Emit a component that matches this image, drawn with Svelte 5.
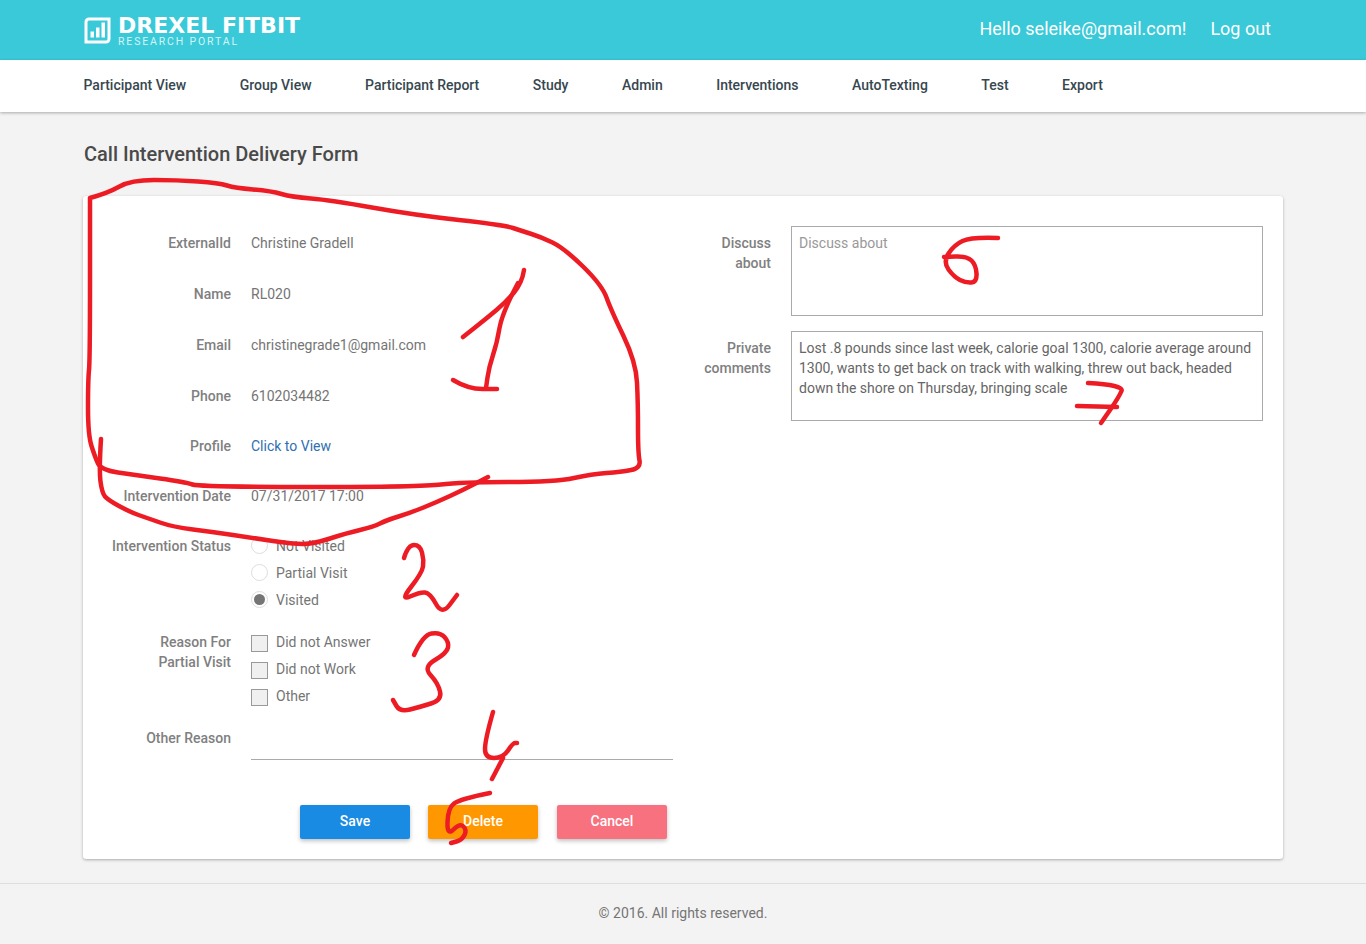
<script>
	const nav = ['Participant View', 'Group View', 'Participant Report', 'Study', 'Admin', 'Interventions', 'AutoTexting', 'Test', 'Export'];
	const info = [
		['ExternalId', 'Christine Gradell'],
		['Name', 'RL020'],
		['Email', 'christinegrade1@gmail.com']
	];
	const statuses = ['Not Visited', 'Partial Visit', 'Visited'];
	const reasons = ['Did not Answer', 'Did not Work', 'Other'];
	const comments = 'Lost .8 pounds since last week, calorie goal 1300, calorie average around 1300, wants to get back on track with walking, threw out back, headed down the shore on Thursday, bringing scale';

	// the reviewer's red pen marks, in page coordinates
	const strokes = [
		'90,198 108,193 131,180 177,180 219,183 235,188 271,191 292,197 330,200 414,215 504,225 522,231 541,237 564,248 602,285 611,310 636,362 638,403 638,453 641,468 621,472 592,474 556,482 460,482 422,487 200,487 185,482 135,475 101,470 95,457 88,435 88,380 90,360 90,198',
		'101,439 99,470 102,493 108,500 130,512 147,518 173,527 213,532 253,538 293,544 313,544 347,533 373,527 387,520 410,513 437,502 463,490 488,477',
		'524,270 522,283 506,302 487,318 463,337',
		'518,283 502,313 497,343 489,367 486,388',
		'453,380 468,389 497,389',
		'404,558 408,545 420,545 424,560 422,573 400,601 420,592 430,593 442,615 457,595',
		'414,655 423,635 440,632 449,642 447,653 423,667 438,683 442,700 420,707 400,712 393,700',
		'493,712 485,740 485,758 503,758 513,743 517,743',
		'503,758 492,779',
		'490,793 460,799 448,808 447,836 460,823 467,830 462,840 451,843',
		'998,238 971,237 954,245 943,262 954,277 966,283 977,282 976,265 967,256 944,257',
		'1088,383 1124,385 1119,397 1101,423',
		'1077,406 1117,407'
	];

	// run a quadratic through the midpoints so the pen lines don't look faceted
	function smooth(line) {
		const pts = line.split(' ').map((p) => p.split(',').map(Number));
		let d = `M${pts[0][0]} ${pts[0][1]}`;
		for (let i = 1; i < pts.length - 1; i++) {
			const mx = (pts[i][0] + pts[i + 1][0]) / 2;
			const my = (pts[i][1] + pts[i + 1][1]) / 2;
			d += ` Q${pts[i][0]} ${pts[i][1]} ${mx} ${my}`;
		}
		const last = pts[pts.length - 1];
		return d + ` L${last[0]} ${last[1]}`;
	}
	const marks = strokes.map(smooth);
</script>

<header>
	<div class="brand">
		<svg width="27" height="27" viewBox="0 0 27 27">
			<path d="M5 2 H25 V22 A3 3 0 0 1 22 25 H2 V5 A3 3 0 0 1 5 2 Z" fill="none" stroke="#fff" stroke-width="3" />
			<rect x="6.5" y="14.5" width="3.5" height="6" fill="#fff" />
			<rect x="12" y="10.5" width="3.5" height="10" fill="#fff" />
			<rect x="17.5" y="5.5" width="3.5" height="15" fill="#fff" />
		</svg>
		<div class="wordmark">
			<span class="name">DREXEL FITBIT</span>
			<span class="sub">RESEARCH PORTAL</span>
		</div>
	</div>
	<div class="user">
		<span>Hello seleike@gmail.com!</span>
		<span>Log out</span>
	</div>
</header>

<nav>
	{#each nav as item}
		<span>{item}</span>
	{/each}
</nav>

<main>
	<h1>Call Intervention Delivery Form</h1>
	<section class="card">
		<div class="col left">
			{#each info as [label, value]}
				<div class="row">
					<div class="label">{label}</div>
					<div class="value">{value}</div>
				</div>
			{/each}
			<div class="row short">
				<div class="label">Phone</div>
				<div class="value">6102034482</div>
			</div>
			<div class="row short">
				<div class="label">Profile</div>
				<div class="value link">Click to View</div>
			</div>
			<div class="row short">
				<div class="label">Intervention Date</div>
				<div class="value">07/31/2017 17:00</div>
			</div>
			<div class="row tight">
				<div class="label">Intervention Status</div>
				<div class="options">
					{#each statuses as status}
						<div class="option">
							<span class="radio" class:on={status === 'Visited'}></span>
							{status}
						</div>
					{/each}
				</div>
			</div>
			<div class="row tight">
				<div class="label">Reason For<br />Partial Visit</div>
				<div class="options">
					{#each reasons as reason}
						<div class="option">
							<span class="check"></span>
							{reason}
						</div>
					{/each}
				</div>
			</div>
			<div class="row other">
				<div class="label">Other Reason</div>
				<div class="underline"></div>
			</div>
			<div class="buttons">
				<button class="save">Save</button>
				<button class="delete">Delete</button>
				<button class="cancel">Cancel</button>
			</div>
		</div>
		<div class="col right">
			<div class="area-row">
				<div class="label">Discuss<br />about</div>
				<textarea placeholder="Discuss about"></textarea>
			</div>
			<div class="area-row">
				<div class="label">Private<br />comments</div>
				<textarea value={comments}></textarea>
			</div>
		</div>
	</section>
</main>

<footer>© 2016. All rights reserved.</footer>

<svg class="marks" width="1366" height="944" viewBox="0 0 1366 944">
	{#each marks as d}
		<path {d} />
	{/each}
</svg>

<style>
	:global(body) {
		background: #f3f3f3;
		font-family: Roboto, "Liberation Sans", sans-serif;
		font-size: 14px;
		color: #757575;
	}
	header {
		height: 60px;
		background: #39c9d8;
		color: #fff;
		display: flex;
		align-items: center;
		justify-content: space-between;
		padding: 0 95px 0 84px;
	}
	.brand {
		display: flex;
		align-items: center;
		gap: 7px;
		margin-top: 1px;
	}
	.wordmark {
		display: flex;
		flex-direction: column;
	}
	.name {
		font-family: "DejaVu Sans", sans-serif;
		font-weight: 700;
		font-size: 22px;
		line-height: 22px;
		white-space: nowrap;
	}
	.sub {
		font-size: 10.5px;
		line-height: 10px;
		letter-spacing: 1.85px;
		color: #d5f4f7;
		white-space: nowrap;
	}
	.user {
		display: flex;
		gap: 24px;
		font-size: 18px;
		margin-top: -3px;
	}
	nav {
		height: 52px;
		box-sizing: border-box;
		padding: 0 0 2px 83.5px;
		background: #fff;
		display: flex;
		align-items: center;
		gap: 53.5px;
		font-weight: 500;
		color: #37474f;
		box-shadow: 0 1px 3px rgba(0, 0, 0, 0.3);
		position: relative;
	}
	main {
		padding: 0 83px;
		height: 771px;
	}
	h1 {
		margin: 0;
		padding: 31px 0 0 1px;
		height: 53px;
		font-size: 20px;
		line-height: 22px;
		font-weight: 500;
		color: #4a4a4a;
	}
	.card {
		height: 663px;
		box-sizing: border-box;
		background: #fff;
		border-radius: 3px;
		box-shadow: 0 1px 3px rgba(0, 0, 0, 0.3);
		padding: 30px 20px 0 0;
		display: flex;
	}
	.left {
		width: 590px;
		padding-top: 7px;
	}
	.right {
		flex: 1;
	}
	.row {
		display: flex;
		line-height: 20px;
		margin-bottom: 31px;
	}
	.row.short {
		margin-bottom: 30px;
	}
	.row.tight {
		margin-bottom: 22px;
	}
	.row.other {
		margin-bottom: 45px;
	}
	.label {
		width: 148px;
		flex: none;
		text-align: right;
		font-size: 14px;
		font-weight: 500;
		line-height: 20px;
		color: #808080;
		margin-right: 20px;
	}
	.value {
		white-space: nowrap;
	}
	.link {
		color: #2f6fb0;
	}
	.option {
		display: flex;
		align-items: center;
		gap: 8px;
		height: 20px;
		margin-bottom: 7px;
	}
	.option:last-child {
		margin-bottom: 0;
	}
	.radio {
		width: 15px;
		height: 15px;
		margin-bottom: 2px;
		border: 1px solid #ddd;
		border-radius: 50%;
		background: #fff;
		position: relative;
	}
	.radio.on::after {
		content: '';
		position: absolute;
		inset: 2px;
		border-radius: 50%;
		background: #757575;
	}
	.check {
		width: 15px;
		height: 15px;
		margin-top: 2px;
		border: 1px solid #999;
		background: #f0f0f0;
	}
	.underline {
		width: 422px;
		height: 31px;
		border-bottom: 1px solid #aaa;
	}
	.buttons {
		display: flex;
		gap: 18px;
		margin-left: 217px;
	}
	button {
		width: 110px;
		height: 34px;
		padding: 0 0 2px;
		border: 0;
		border-radius: 2px;
		color: #fff;
		font: 500 14px Roboto, sans-serif;
		box-shadow: 0 2px 4px rgba(0, 0, 0, 0.25);
	}
	.save { background: #1a8be3; }
	.delete { background: #ff9800; }
	.cancel { background: #f7717f; margin-left: 1px; }
	.area-row {
		display: flex;
		margin-bottom: 15px;
	}
	.area-row .label {
		width: 98px;
		padding-top: 7px;
		margin-right: 20px;
	}
	textarea {
		flex: 1;
		height: 90px;
		box-sizing: border-box;
		border: 1px solid #aaa;
		border-radius: 0;
		padding: 6px 7px;
		margin: 0;
		resize: none;
		outline: 0;
		overflow: hidden;
		font: 14px/20px Roboto, sans-serif;
		color: #666;
	}
	textarea::placeholder {
		color: #999;
		opacity: 1;
	}
	footer {
		border-top: 1px solid #ddd;
		height: 60px;
		line-height: 58px;
		text-align: center;
		color: #757575;
	}
	.marks {
		position: absolute;
		left: 0;
		top: 0;
		pointer-events: none;
	}
	.marks path {
		fill: none;
		stroke: #ed1c24;
		stroke-width: 4.5;
		stroke-linecap: round;
		stroke-linejoin: round;
	}
</style>
